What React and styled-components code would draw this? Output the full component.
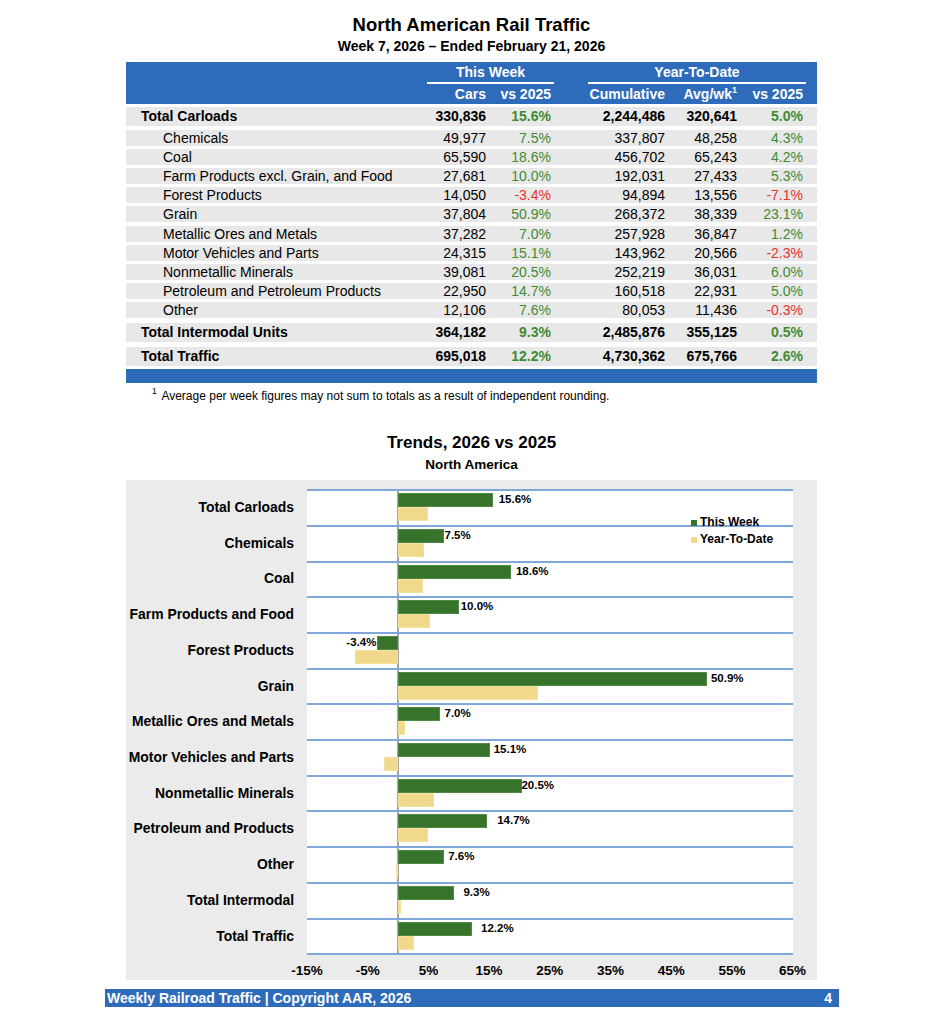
import React from 'react'
import styled, { createGlobalStyle } from 'styled-components'

const BLUE = '#2e6bbb'
const GREEN_TXT = '#3f8b31'
const RED_TXT = '#e8322b'
const ZERO = 91 // px from left of plot to the 0% line
const SCALE = 6.07 // px per percent

const rows = [
    { label: 'Total Carloads', cars: '330,836', wk: '15.6%', cum: '2,244,486', avg: '320,641', ytd: '5.0%', total: true },
    { label: 'Chemicals', cars: '49,977', wk: '7.5%', cum: '337,807', avg: '48,258', ytd: '4.3%' },
    { label: 'Coal', cars: '65,590', wk: '18.6%', cum: '456,702', avg: '65,243', ytd: '4.2%' },
    { label: 'Farm Products excl. Grain, and Food', cars: '27,681', wk: '10.0%', cum: '192,031', avg: '27,433', ytd: '5.3%' },
    { label: 'Forest Products', cars: '14,050', wk: '-3.4%', cum: '94,894', avg: '13,556', ytd: '-7.1%' },
    { label: 'Grain', cars: '37,804', wk: '50.9%', cum: '268,372', avg: '38,339', ytd: '23.1%' },
    { label: 'Metallic Ores and Metals', cars: '37,282', wk: '7.0%', cum: '257,928', avg: '36,847', ytd: '1.2%' },
    { label: 'Motor Vehicles and Parts', cars: '24,315', wk: '15.1%', cum: '143,962', avg: '20,566', ytd: '-2.3%' },
    { label: 'Nonmetallic Minerals', cars: '39,081', wk: '20.5%', cum: '252,219', avg: '36,031', ytd: '6.0%' },
    { label: 'Petroleum and Petroleum Products', cars: '22,950', wk: '14.7%', cum: '160,518', avg: '22,931', ytd: '5.0%' },
    { label: 'Other', cars: '12,106', wk: '7.6%', cum: '80,053', avg: '11,436', ytd: '-0.3%' },
    { label: 'Total Intermodal Units', cars: '364,182', wk: '9.3%', cum: '2,485,876', avg: '355,125', ytd: '0.5%', total: true, late: true },
    { label: 'Total Traffic', cars: '695,018', wk: '12.2%', cum: '4,730,362', avg: '675,766', ytd: '2.6%', total: true, late: true },
]

// chart rows: week %, ytd %, gap between bar and its label
const trends = [
    { label: 'Total Carloads', week: 15.6, ytd: 5.0, gap: 6 },
    { label: 'Chemicals', week: 7.5, ytd: 4.3, gap: 1 },
    { label: 'Coal', week: 18.6, ytd: 4.2, gap: 5 },
    { label: 'Farm Products and Food', week: 10.0, ytd: 5.3, gap: 2 },
    { label: 'Forest Products', week: -3.4, ytd: -7.1, gap: 1 },
    { label: 'Grain', week: 50.9, ytd: 23.1, gap: 4 },
    { label: 'Metallic Ores and Metals', week: 7.0, ytd: 1.2, gap: 4 },
    { label: 'Motor Vehicles and Parts', week: 15.1, ytd: -2.3, gap: 4 },
    { label: 'Nonmetallic Minerals', week: 20.5, ytd: 6.0, gap: -1 },
    { label: 'Petroleum and Products', week: 14.7, ytd: 5.0, gap: 10 },
    { label: 'Other', week: 7.6, ytd: -0.3, gap: 4 },
    { label: 'Total Intermodal', week: 9.3, ytd: 0.5, gap: 9 },
    { label: 'Total Traffic', week: 12.2, ytd: 2.6, gap: 9 },
]

const ticks = ['-15%', '-5%', '5%', '15%', '25%', '35%', '45%', '55%', '65%']

const GlobalStyle = createGlobalStyle`
    body {
        margin: 0;
        background: #fff;
        color: #000;
        font-family: "Liberation Sans", Arial, sans-serif;
    }
`

const App = () => {
    return (
        <>
            <GlobalStyle />
            <Sheet>
                <Title>North American Rail Traffic</Title>
                <Subtitle>Week 7, 2026 – Ended February 21, 2026</Subtitle>

                <TableHead>
                    <GridRow>
                        <HeadGroup $col="2 / span 2" $inset={0}>This Week</HeadGroup>
                        <HeadGroup $col="4 / span 3" $inset={37}>Year-To-Date</HeadGroup>
                    </GridRow>
                    <HeadRow>
                        <span />
                        <HeadCell>Cars</HeadCell>
                        <HeadCell>vs 2025</HeadCell>
                        <HeadCell>Cumulative</HeadCell>
                        <HeadCell>Avg/wk<sup>1</sup></HeadCell>
                        <HeadCell>vs 2025</HeadCell>
                    </HeadRow>
                </TableHead>

                {rows.map((r) => (
                    <DataRow key={r.label} $total={r.total} $late={r.late}>
                        <RowLabel $total={r.total}>{r.label}</RowLabel>
                        <Num>{r.cars}</Num>
                        <Num $tone={r.wk.startsWith('-') ? 'neg' : 'pos'}>{r.wk}</Num>
                        <Num>{r.cum}</Num>
                        <Num>{r.avg}</Num>
                        <Num $tone={r.ytd.startsWith('-') ? 'neg' : 'pos'}>{r.ytd}</Num>
                    </DataRow>
                ))}
                <BottomBar />

                <Footnote><sup>1</sup> Average per week figures may not sum to totals as a result of independent rounding.</Footnote>

                <ChartTitle>Trends, 2026 vs 2025</ChartTitle>
                <ChartSub>North America</ChartSub>

                <ChartBox>
                    <Legend>
                        <LegendItem><Swatch $c="#37732b" />This Week</LegendItem>
                        <LegendItem><Swatch $c="#f0d98b" />Year-To-Date</LegendItem>
                    </Legend>
                    <PlotGrid>
                        {trends.map((t, i) => (
                            <React.Fragment key={t.label}>
                                <CatLabel>{t.label}</CatLabel>
                                <PlotCell $last={i === trends.length - 1}>
                                    <BarTrack $neg={t.week < 0}>
                                        {t.week < 0 && <ValueLabel style={{ marginRight: t.gap }}>{t.week.toFixed(1)}%</ValueLabel>}
                                        <Bar $week style={{ width: Math.abs(t.week) * SCALE }} />
                                        {t.week >= 0 && <ValueLabel style={{ marginLeft: t.gap }}>{t.week.toFixed(1)}%</ValueLabel>}
                                    </BarTrack>
                                    <BarTrack $neg={t.ytd < 0}>
                                        <Bar style={{ width: Math.abs(t.ytd) * SCALE }} />
                                    </BarTrack>
                                </PlotCell>
                            </React.Fragment>
                        ))}
                    </PlotGrid>
                    <Axis>
                        {ticks.map((t) => <Tick key={t}>{t}</Tick>)}
                    </Axis>
                </ChartBox>

                <Footer>
                    <span>Weekly Railroad Traffic | Copyright AAR, 2026</span>
                    <span>4</span>
                </Footer>
            </Sheet>
        </>
    )
}

export default App


const Sheet = styled.div`
    width: 691px;
    margin-left: 126px;
    padding-top: 14px;
    padding-bottom: 14px;
`
const Title = styled.h1`
    margin: 0;
    text-align: center;
    font-size: 18.5px;
    line-height: 22px;
    font-weight: 700;
`
const Subtitle = styled.div`
    margin-top: 1px;
    text-align: center;
    font-size: 14px;
    line-height: 18px;
    font-weight: 700;
`

//*************************** table */

const TableHead = styled.div`
    margin-top: 7px;
    height: 42px;
    background: ${BLUE};
    color: #fff;
    font-size: 14px;
    font-weight: 700;
`
const GridRow = styled.div`
    display: grid;
    grid-template-columns: 301px 59px 65px 114px 72px 66px;
    padding-right: 14px;
`
const HeadGroup = styled.div`
    grid-column: ${(p) => p.$col};
    margin-left: ${(p) => p.$inset}px;
    margin-right: -3px;
    border-bottom: 2px solid #fff;
    text-align: center;
    line-height: 20px;
`
const HeadRow = styled(GridRow)`
    height: 20px;
    line-height: 20px;
`
const HeadCell = styled.div`
    text-align: right;
    white-space: nowrap;

    sup {
        font-size: 9px;
        line-height: 0;
        vertical-align: 6px;
    }
`
const DataRow = styled(GridRow)`
    margin-top: ${(p) => (p.$late ? 5 : p.$total ? 3.4 : 3.2)}px;
    height: ${(p) => (p.$total ? 19 : 16)}px;
    line-height: ${(p) => (p.$total ? 19 : 16)}px;
    background: #e8e8e8;
    font-size: 14px;
    font-weight: ${(p) => (p.$total ? 700 : 400)};
`
const RowLabel = styled.div`
    padding-left: ${(p) => (p.$total ? 15 : 37)}px;
    white-space: nowrap;
`
const Num = styled.div`
    text-align: right;
    white-space: nowrap;
    color: ${(p) => (p.$tone === 'neg' ? RED_TXT : p.$tone === 'pos' ? GREEN_TXT : 'inherit')};
`
const BottomBar = styled.div`
    margin-top: 3px;
    height: 14px;
    background: ${BLUE};
`
const Footnote = styled.p`
    margin: 5px 0 0 26px;
    height: 16px;
    font-size: 12px;
    line-height: 16px;

    sup {
        font-size: 8.5px;
        line-height: 0;
        vertical-align: 6px;
        margin-right: 2px;
    }
`

//*************************** chart */

const ChartTitle = styled.h2`
    margin: 29px 0 0;
    text-align: center;
    font-size: 17px;
    line-height: 20px;
    font-weight: 700;
`
const ChartSub = styled.div`
    margin-top: 3px;
    text-align: center;
    font-size: 13.5px;
    line-height: 18px;
    font-weight: 700;
`
const ChartBox = styled.div`
    position: relative;
    margin-top: 6px;
    padding: 9px 24px 1px 0;
    background: #ebebeb;
`
const PlotGrid = styled.div`
    display: grid;
    grid-template-columns: 181px 486px;
`
const CatLabel = styled.div`
    display: flex;
    align-items: center;
    justify-content: flex-end;
    padding-right: 13px;
    font-size: 13.9px;
    font-weight: 700;
    white-space: nowrap;
`
const PlotCell = styled.div`
    box-sizing: border-box;
    height: ${(p) => (p.$last ? 37.7 : 35.7)}px;
    padding-top: 2px;
    border-top: 2px solid #7fa7dc;
    border-bottom: ${(p) => (p.$last ? '2px solid #7fa7dc' : 'none')};
    background: linear-gradient(to right, #fff 90px, #a6a6a6 90px, #a6a6a6 92px, #fff 92px);
`
const BarTrack = styled.div`
    display: flex;
    align-items: center;
    height: 14px;
    ${(p) => (p.$neg
        ? `width: ${ZERO}px; justify-content: flex-end;`
        : `padding-left: ${ZERO}px;`)}
`
const Bar = styled.div`
    flex: none;
    height: 14px;
    box-sizing: border-box;
    background: ${(p) => (p.$week ? '#37732b' : '#f0d98b')};
    border: 1px solid ${(p) => (p.$week ? '#4f8a45' : '#f3e1a0')};
`
const ValueLabel = styled.span`
    position: relative;
    top: -1px;
    font-size: 11.5px;
    font-weight: 700;
    line-height: 14px;
    white-space: nowrap;
`
const Legend = styled.div`
    position: absolute;
    left: 565px;
    top: 34px;
    font-size: 12px;
    font-weight: 700;
    line-height: 17px;
`
const LegendItem = styled.div`
    display: flex;
    align-items: center;
`
const Swatch = styled.span`
    width: 6px;
    height: 6px;
    margin-right: 3px;
    background: ${(p) => p.$c};
`
const Axis = styled.div`
    display: flex;
    width: ${9 * 60.7}px;
    margin-left: ${181 - 30.35}px;
    padding-top: 8px;
`
const Tick = styled.div`
    flex: 1;
    text-align: center;
    font-size: 13.5px;
    font-weight: 700;
    line-height: 16px;
`
const Footer = styled.div`
    box-sizing: border-box;
    display: flex;
    justify-content: space-between;
    align-items: center;
    width: 734px;
    height: 18px;
    margin: 9px 0 0 -21px;
    padding: 0 7px 0 2px;
    background: ${BLUE};
    color: #fff;
    font-size: 14px;
    font-weight: 700;
`
